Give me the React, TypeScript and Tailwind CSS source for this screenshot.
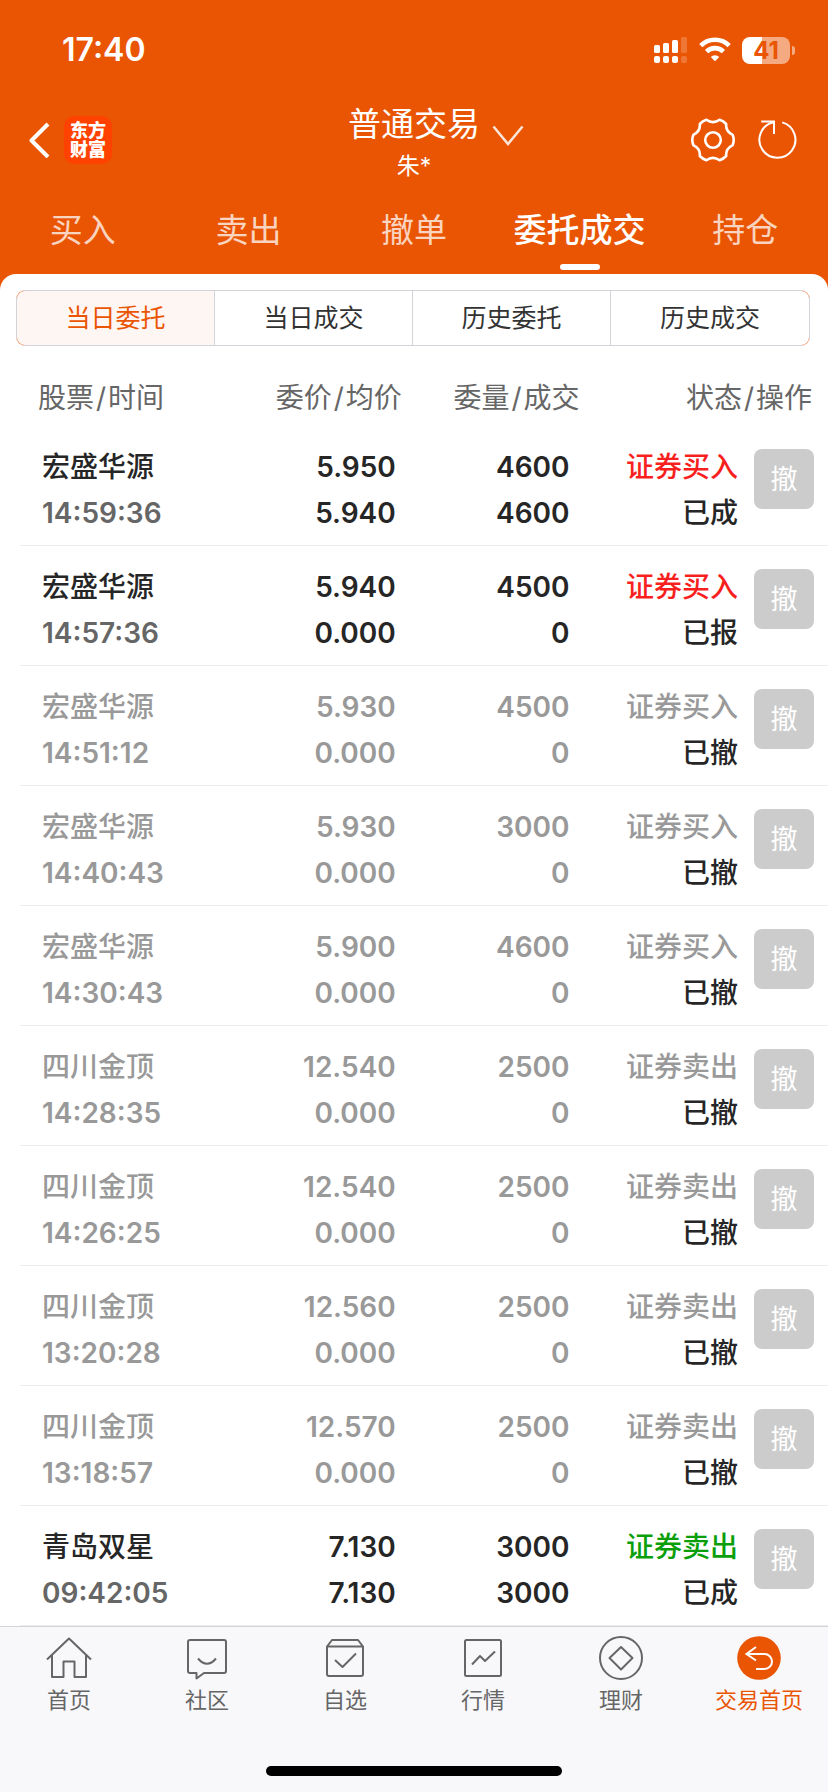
/**
 * App.tsx
 * 委托成交 — 当日委托列表
 */
import { useState } from "react";
import type { ReactNode } from "react";
import { clsx } from "clsx";

type Order = {
  name: string;
  time: string;
  price: string;
  avg: string;
  qty: string;
  filled: string;
  side: "证券买入" | "证券卖出";
  status: "已成" | "已报" | "已撤";
};

const orders: Order[] = [
  { name: "宏盛华源", time: "14:59:36", price: "5.950", avg: "5.940", qty: "4600", filled: "4600", side: "证券买入", status: "已成" },
  { name: "宏盛华源", time: "14:57:36", price: "5.940", avg: "0.000", qty: "4500", filled: "0", side: "证券买入", status: "已报" },
  { name: "宏盛华源", time: "14:51:12", price: "5.930", avg: "0.000", qty: "4500", filled: "0", side: "证券买入", status: "已撤" },
  { name: "宏盛华源", time: "14:40:43", price: "5.930", avg: "0.000", qty: "3000", filled: "0", side: "证券买入", status: "已撤" },
  { name: "宏盛华源", time: "14:30:43", price: "5.900", avg: "0.000", qty: "4600", filled: "0", side: "证券买入", status: "已撤" },
  { name: "四川金顶", time: "14:28:35", price: "12.540", avg: "0.000", qty: "2500", filled: "0", side: "证券卖出", status: "已撤" },
  { name: "四川金顶", time: "14:26:25", price: "12.540", avg: "0.000", qty: "2500", filled: "0", side: "证券卖出", status: "已撤" },
  { name: "四川金顶", time: "13:20:28", price: "12.560", avg: "0.000", qty: "2500", filled: "0", side: "证券卖出", status: "已撤" },
  { name: "四川金顶", time: "13:18:57", price: "12.570", avg: "0.000", qty: "2500", filled: "0", side: "证券卖出", status: "已撤" },
  { name: "青岛双星", time: "09:42:05", price: "7.130", avg: "7.130", qty: "3000", filled: "3000", side: "证券卖出", status: "已成" },
];

const tabs = ["买入", "卖出", "撤单", "委托成交", "持仓"];
const segments = ["当日委托", "当日成交", "历史委托", "历史成交"];

function StatusBar() {
  return (
    <div className="flex h-[100px] items-center justify-between pr-[33px] pl-[62px]">
      <span className="text-[32px] leading-10 font-semibold">17:40</span>
      <div className="flex items-center gap-[10px]">
        <svg width="34" height="28" viewBox="0 0 34 28" fill="currentColor" aria-hidden="true">
          <rect x="0" y="9" width="6" height="8" rx="1.5" />
          <rect x="9" y="7" width="6" height="10" rx="1.5" />
          <rect x="18" y="4" width="6" height="13" rx="1.5" />
          <rect x="27" y="1" width="6" height="16" rx="1.5" opacity="0.2" />
          <rect x="0" y="20" width="6" height="7" rx="2" />
          <rect x="9" y="20" width="6" height="7" rx="2" />
          <rect x="18" y="20" width="6" height="7" rx="2" />
          <rect x="27" y="20" width="6" height="7" rx="2" opacity="0.2" />
        </svg>
        <svg width="34" height="28" viewBox="0 0 34 28" fill="none" stroke="currentColor" strokeWidth="4.6" aria-hidden="true">
          <path d="M2.8 9.6a20.2 20.2 0 0 1 28.4 0" />
          <path d="M8.6 15.6a12 12 0 0 1 16.8 0" />
          <path d="M17 25.2l-4.2-4.3a6 6 0 0 1 8.4 0z" fill="currentColor" stroke="none" />
        </svg>
        <div className="flex items-center gap-[2px]">
          <div className="flex h-[27px] w-12 items-center justify-center rounded-lg bg-linear-to-r from-white from-[42%] to-white/50 to-[42%] text-[24px] leading-[27px] font-bold text-[#ea5504]">
            41
          </div>
          <div className="h-[9px] w-[3px] rounded-r-full bg-white/50" />
        </div>
      </div>
    </div>
  );
}

function NavBar() {
  return (
    <div className="grid h-20 grid-cols-[1fr_auto_1fr] items-start px-7">
      <div className="flex h-20 items-center gap-[14px]">
        <button type="button" aria-label="返回">
          <svg width="22" height="36" viewBox="0 0 22 36" fill="none" stroke="currentColor" strokeWidth="4" strokeLinejoin="round">
            <path d="M20 2L3.5 18.5L20 35" />
          </svg>
        </button>
        <div className="flex h-12 w-12 flex-col items-center justify-center rounded-[10px] bg-[#ff4200] text-[18px] leading-[19px] font-black">
          <span>东方</span>
          <span>财富</span>
        </div>
      </div>
      <button type="button" className="relative flex flex-col items-center px-14 pt-[2px]">
        <span className="text-[33px] leading-[44px]">普通交易</span>
        <span className="text-[23px] leading-10">朱*</span>
        <svg className="absolute top-[25px] right-3" width="32" height="22" viewBox="0 0 32 22" fill="none" stroke="currentColor" strokeWidth="2.5" opacity="0.85">
          <path d="M1.5 1.5L16 19L30.5 1.5" />
        </svg>
      </button>
      <div className="mr-[2px] flex h-20 items-center justify-end gap-[22px]">
        <button type="button" aria-label="设置">
          <svg width="46" height="46" viewBox="-23 -23 46 46" fill="none" stroke="currentColor" strokeWidth="2.6" strokeLinejoin="round">
            <path d="M-6.6-20.2Q0-15.6 6.6-20.2Q10.4-19 13.2-16Q12.4-9 19.6-5.2Q21.8 0 19.6 5.2Q12.4 9 13.2 16Q10.4 19 6.6 20.2Q0 15.6-6.6 20.2Q-10.4 19-13.2 16Q-12.4 9-19.6 5.2Q-21.8 0-19.6-5.2Q-12.4-9-13.2-16Q-10.4-19-6.6-20.2Z" />
            <circle r="7.8" />
          </svg>
        </button>
        <button type="button" aria-label="刷新">
          <svg width="40" height="42" viewBox="0 0 40 42" fill="none" stroke="currentColor" strokeWidth="2">
            <path d="M24.2 3.4A18 18 0 1 1 15.4 3.2" />
            <path d="M3.2 2.6H16V15" />
          </svg>
        </button>
      </div>
    </div>
  );
}

function OrderRow({ order }: { order: Order }) {
  const cancelled = order.status === "已撤";
  const sideColor = cancelled
    ? "text-[#999999]"
    : order.side === "证券买入"
      ? "text-[#f81f1f]"
      : "text-[#0a9f0a]";

  return (
    <tr className={clsx("align-top", cancelled ? "text-[#999999]" : "text-[#262626]")}>
      <td className="border-b border-[#ececec] pt-[18px] pb-[9px] pl-[22px]">
        <div className="font-medium">{order.name}</div>
        <div className={cancelled ? "" : "text-[#666666]"}>{order.time}</div>
      </td>
      <td className="border-b border-[#ececec] pt-[18px] pr-[6px] text-right">
        <div>{order.price}</div>
        <div>{order.avg}</div>
      </td>
      <td className="border-b border-[#ececec] pt-[18px] pr-[10px] text-right">
        <div>{order.qty}</div>
        <div>{order.filled}</div>
      </td>
      <td className="border-b border-[#ececec] pt-[18px] text-right font-medium">
        <div className={sideColor}>{order.side}</div>
        <div className="text-[#262626]">{order.status}</div>
      </td>
      <td className="border-b border-[#ececec] pt-[23px] pr-[14px]">
        <button type="button" className="ml-auto flex h-[60px] w-[60px] items-center justify-center rounded-lg bg-[#cccccc] text-[27px] leading-none font-normal text-white">
          撤
        </button>
      </td>
    </tr>
  );
}

function HeadLabel({ first, second }: { first: string; second: string }) {
  return (
    <>
      {first}
      <span className="px-[2px]">/</span>
      {second}
    </>
  );
}

function OrderTable() {
  return (
    <div className="pl-5">
      <table className="w-full table-fixed border-separate border-spacing-0">
        <colgroup>
          <col className="w-[204px]" />
          <col className="w-[22%]" />
          <col className="w-[22%]" />
          <col />
          <col className="w-[90px]" />
        </colgroup>
        <thead className="text-[28px] leading-10 text-[#666666]">
          <tr>
            <th className="pt-8 pb-2 pl-[18px] text-left font-normal">
              <HeadLabel first="股票" second="时间" />
            </th>
            <th className="pt-8 pb-2 text-right font-normal">
              <HeadLabel first="委价" second="均价" />
            </th>
            <th className="pt-8 pb-2 text-right font-normal">
              <HeadLabel first="委量" second="成交" />
            </th>
            <th colSpan={2} className="pt-8 pr-4 pb-2 text-right font-normal">
              <HeadLabel first="状态" second="操作" />
            </th>
          </tr>
        </thead>
        <tbody className="text-[28px] leading-[46px] font-semibold">
          {orders.map((order) => (
            <OrderRow key={order.time} order={order} />
          ))}
        </tbody>
      </table>
    </div>
  );
}

function NavIcon({ children }: { children: ReactNode }) {
  return (
    <svg width="46" height="46" viewBox="0 0 46 46" fill="none" stroke="currentColor" strokeWidth="2" strokeLinejoin="round" aria-hidden="true">
      {children}
    </svg>
  );
}

const navItems = [
  {
    label: "首页",
    icon: (
      <>
        <path d="M1 24.5L23 3.5L45 24.5" />
        <path d="M6 20V42H17.5V26.5H28.5V42H40V20" />
      </>
    ),
  },
  {
    label: "社区",
    icon: (
      <>
        <path d="M6 5H40Q42 5 42 7V36Q42 38 40 38H20L12.5 43.5V38H6Q4 38 4 36V7Q4 5 6 5Z" />
        <path d="M14 23.5Q23 34 32 23.5" />
      </>
    ),
  },
  {
    label: "自选",
    icon: (
      <>
        <path d="M5 11.5L10 5H36L41 11.5V39Q41 41 39 41H7Q5 41 5 39ZM5 11.5H41" />
        <path d="M13 25L20.5 32L34 18.5" />
      </>
    ),
  },
  {
    label: "行情",
    icon: (
      <>
        <rect x="5" y="5" width="36" height="36" rx="1.5" />
        <path d="M12 29.5L20 21L25 26L35 16.5" />
      </>
    ),
  },
  {
    label: "理财",
    icon: (
      <>
        <circle cx="23" cy="23" r="21" />
        <path d="M23 12L34.5 23L23 34.5L11.5 23Z" />
      </>
    ),
  },
  {
    label: "交易首页",
    icon: (
      <>
        <circle cx="23" cy="23" r="21.8" fill="#ea5504" stroke="none" />
        <path d="M20 12L10.5 19L20 25.5M10.5 19H28.5A7.5 7.5 0 0 1 28.5 34H20" stroke="white" strokeLinejoin="miter" />
      </>
    ),
  },
];

function BottomNav() {
  return (
    <nav className="flex-1 border-t border-[#d4d4d8] bg-[#f8f8fb]">
      <div className="grid grid-cols-6 pt-2">
        {navItems.map((item) => (
          <a
            key={item.label}
            href="#"
            className={clsx("flex flex-col items-center", item.label === "交易首页" ? "text-[#ea5504]" : "text-[#666666]")}
          >
            <NavIcon>{item.icon}</NavIcon>
            <span className="mt-[3px] text-[22px] leading-8">{item.label}</span>
          </a>
        ))}
      </div>
      <div className="mx-auto mt-[50px] mb-4 h-[10px] w-[296px] rounded-full bg-black" />
    </nav>
  );
}

export default function App() {
  const [tab, setTab] = useState("委托成交");
  const [segment, setSegment] = useState("当日委托");

  return (
    <div className="flex min-h-screen flex-col bg-[#ea5504] font-['Inter','Noto_Sans_CJK_SC',sans-serif]">
      <header className="text-white">
        <StatusBar />
        <NavBar />
        <div className="grid grid-cols-5">
          {tabs.map((t) => (
            <button
              key={t}
              type="button"
              onClick={() => setTab(t)}
              className="flex h-[94px] flex-col items-center pt-[27px] text-[33px] leading-[46px]"
            >
              <span className={t === tab ? "font-medium" : "text-white/75"}>{t}</span>
              {t === tab && <span className="mt-[11px] h-[6px] w-10 rounded-[3px] bg-white" />}
            </button>
          ))}
        </div>
      </header>

      <main className="rounded-t-[16px] bg-white pt-4">
        <div className="mr-[18px] ml-4 rounded-[9px] border border-[#ea5504]/60 [clip-path:inset(0_round_9px)]">
          <div className="-m-px grid grid-cols-4 divide-x divide-[#d3d3da] border border-[#d3d3da]">
            {segments.map((s) => (
              <button
                key={s}
                type="button"
                onClick={() => setSegment(s)}
                className={clsx("h-[54px] text-[25px] leading-[54px]", s === segment ? "bg-[#ea5504]/5 text-[#ea5504]" : "text-[#333333]")}
              >
                {s}
              </button>
            ))}
          </div>
        </div>
        <OrderTable />
      </main>

      <BottomNav />
    </div>
  );
}
